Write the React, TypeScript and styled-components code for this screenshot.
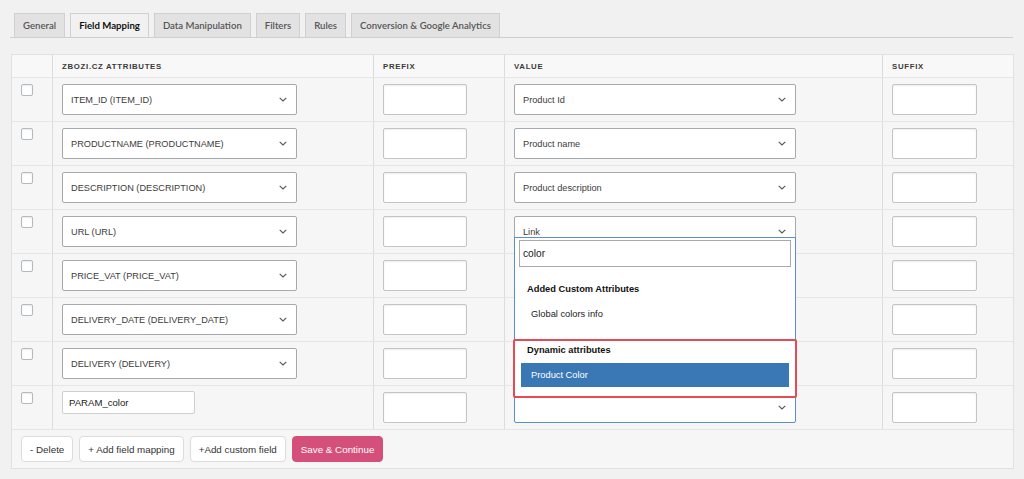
import styled, { createGlobalStyle } from "styled-components";

const GlobalStyle = createGlobalStyle`
  body {
    margin: 0;
    background: #f1f1f1;
    font-family: "Liberation Sans", Arial, sans-serif;
  }
`;

const Page = styled.div`
  padding: 13px 10px 0 10px;
`;

const TabBar = styled.div`
  display: flex;
  gap: 5px;
  padding-left: 4px;
  width: 999px;
  border-bottom: 1px solid #cfcfcf;
`;

const Tab = styled.div<{ $active?: boolean }>`
  height: 24px;
  box-sizing: border-box;
  padding: 0 8px;
  display: flex;
  align-items: center;
  border: 1px solid #d0d0d0;
  border-bottom: none;
  margin-bottom: ${(p) => (p.$active ? "-1px" : "0")};
  background: ${(p) => (p.$active ? "#f1f1f1" : "#e2e2e2")};
  color: ${(p) => (p.$active ? "#111" : "#555")};
  font-family: Lato, "Liberation Sans", sans-serif;
  font-weight: ${(p) => (p.$active ? 700 : 600)};
  font-size: 9.6px;
`;

const Panel = styled.div`
  margin: 16px 0 0 1px;
  width: 1001px;
  border: 1px solid #e1e1e1;
  background: #f6f6f6;
`;

const Row = styled.div<{ $head?: boolean }>`
  display: grid;
  grid-template-columns: 41px 321px 131px 378px 130px;
  height: ${(p) => (p.$head ? "22px" : "43px")};
  border-bottom: 1px solid #e5e5e5;
  background: ${(p) => (p.$head ? "#f8f8f8" : "#f6f6f6")};
`;

const Cell = styled.div<{ $last?: boolean; $top?: number }>`
  position: relative;
  padding: ${(p) => p.$top ?? 6}px 9px 0 9px;
  border-right: ${(p) => (p.$last ? "none" : "1px solid #dcdcdc")};
`;

const HeadCell = styled.div<{ $last?: boolean }>`
  display: flex;
  align-items: center;
  padding-left: 9px;
  border-right: ${(p) => (p.$last ? "none" : "1px solid #dcdcdc")};
  font-size: 7.8px;
  font-weight: 700;
  letter-spacing: 0.7px;
  color: #3a3a3a;
`;

const Check = styled.div`
  width: 10px;
  height: 10px;
  border: 1px solid #b4b9be;
  border-radius: 2px;
  background: #fff;
  box-shadow: inset 0 1px 2px rgba(0, 0, 0, 0.08);
`;

const SelectBox = styled.div<{ $width: number; $open?: boolean }>`
  position: relative;
  box-sizing: border-box;
  width: ${(p) => p.$width}px;
  height: 31px;
  display: flex;
  align-items: center;
  justify-content: space-between;
  padding: 0 9px 0 8px;
  background: #fff;
  border: 1px solid ${(p) => (p.$open ? "#5b8fc7" : "#a7aaad")};
  border-radius: ${(p) => (p.$open ? "0 0 2px 2px" : "2px")};
  font-size: 9.2px;
  color: #3c3c3c;
`;

const TextBox = styled.div<{ $width: number }>`
  box-sizing: border-box;
  width: ${(p) => p.$width}px;
  height: 31px;
  background: #fff;
  border: 1px solid #c4c4c4;
  border-radius: 2px;
  box-shadow: inset 0 1px 2px rgba(0, 0, 0, 0.07);
`;

const NameInput = styled.div`
  box-sizing: border-box;
  width: 133px;
  height: 23px;
  display: flex;
  align-items: center;
  padding-left: 6px;
  background: #fff;
  border: 1px solid #cfcfcf;
  border-radius: 2px;
  font-size: 9.6px;
  color: #222;
`;

const Dropdown = styled.div`
  position: absolute;
  left: -1px;
  right: -1px;
  bottom: 100%;
  height: 156px;
  box-sizing: border-box;
  background: #fff;
  border: 1px solid #5b8fc7;
  border-bottom: none;
  padding: 2px 4px 0 4px;
  z-index: 5;
`;

const Search = styled.div`
  box-sizing: border-box;
  height: 27px;
  display: flex;
  align-items: center;
  padding-left: 3px;
  border: 1px solid #aaa;
  font-size: 10.2px;
  color: #222;
`;

const GroupLabel = styled.div<{ $gap: number }>`
  margin-top: ${(p) => p.$gap}px;
  height: 20px;
  line-height: 20px;
  padding-left: 8px;
  font-size: 9.3px;
  font-weight: 700;
  color: #111;
`;

const Option = styled.div<{ $active?: boolean }>`
  margin: 3px 2px 0 2px;
  height: 24px;
  line-height: 24px;
  padding-left: 10px;
  font-size: 9.3px;
  background: ${(p) => (p.$active ? "#3a78b5" : "transparent")};
  color: ${(p) => (p.$active ? "#fff" : "#222")};
`;

const Highlight = styled.div`
  position: absolute;
  left: -2px;
  right: -2px;
  top: 101px;
  height: 59px;
  box-sizing: border-box;
  border: 2px solid #e44c55;
  border-radius: 2px;
  pointer-events: none;
`;

const Footer = styled.div`
  display: flex;
  gap: 6px;
  padding: 6px 9px 6px 9px;
`;

const Button = styled.div<{ $primary?: boolean }>`
  height: 26px;
  box-sizing: border-box;
  display: flex;
  align-items: center;
  padding: 0 8px;
  border-radius: 4px;
  border: 1px solid ${(p) => (p.$primary ? "#d4507a" : "#dcdcdc")};
  background: ${(p) => (p.$primary ? "#d4507a" : "#fff")};
  color: ${(p) => (p.$primary ? "#fff" : "#333")};
  font-size: 9.8px;
`;

const Chevron = () => (
  <svg width="8" height="5" viewBox="0 0 8 5">
    <polyline
      points="0.7,0.8 4,4 7.3,0.8"
      fill="none"
      stroke="#555"
      strokeWidth="1.1"
    />
  </svg>
);

const rows = [
  ["ITEM_ID (ITEM_ID)", "Product Id"],
  ["PRODUCTNAME (PRODUCTNAME)", "Product name"],
  ["DESCRIPTION (DESCRIPTION)", "Product description"],
  ["URL (URL)", "Link"],
  ["PRICE_VAT (PRICE_VAT)", ""],
  ["DELIVERY_DATE (DELIVERY_DATE)", ""],
  ["DELIVERY (DELIVERY)", ""],
];

const tabs = [
  "General",
  "Field Mapping",
  "Data Manipulation",
  "Filters",
  "Rules",
  "Conversion & Google Analytics",
];

export default function App() {
  return (
    <Page>
      <GlobalStyle />
      <TabBar>
        {tabs.map((t) => (
          <Tab key={t} $active={t === "Field Mapping"}>
            {t}
          </Tab>
        ))}
      </TabBar>

      <Panel>
        <Row $head>
          <HeadCell />
          <HeadCell>ZBOZI.CZ ATTRIBUTES</HeadCell>
          <HeadCell>PREFIX</HeadCell>
          <HeadCell>VALUE</HeadCell>
          <HeadCell $last>SUFFIX</HeadCell>
        </Row>

        {rows.map(([attr, value]) => (
          <Row key={attr}>
            <Cell $top={6}>
              <Check />
            </Cell>
            <Cell>
              <SelectBox $width={235}>
                <span>{attr}</span>
                <Chevron />
              </SelectBox>
            </Cell>
            <Cell>
              <TextBox $width={84} />
            </Cell>
            <Cell>
              <SelectBox $width={282}>
                <span>{value}</span>
                <Chevron />
              </SelectBox>
            </Cell>
            <Cell $last>
              <TextBox $width={85} />
            </Cell>
          </Row>
        ))}

        <Row>
          <Cell $top={6}>
            <Check />
          </Cell>
          <Cell $top={5}>
            <NameInput>PARAM_color</NameInput>
          </Cell>
          <Cell>
            <TextBox $width={84} />
          </Cell>
          <Cell>
            <SelectBox $width={282} $open>
              <Dropdown>
                <Search>color</Search>
                <GroupLabel $gap={12}>Added Custom Attributes</GroupLabel>
                <Option>Global colors info</Option>
                <GroupLabel $gap={14}>Dynamic attributes</GroupLabel>
                <Option $active>Product Color</Option>
                <Highlight />
              </Dropdown>
              <span />
              <Chevron />
            </SelectBox>
          </Cell>
          <Cell $last>
            <TextBox $width={85} />
          </Cell>
        </Row>

        <Footer>
          <Button>- Delete</Button>
          <Button>+ Add field mapping</Button>
          <Button>+Add custom field</Button>
          <Button $primary>Save &amp; Continue</Button>
        </Footer>
      </Panel>
    </Page>
  );
}
